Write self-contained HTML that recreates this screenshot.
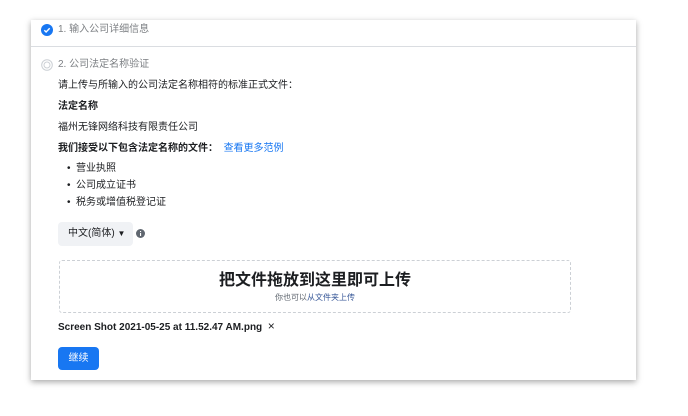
<!DOCTYPE html>
<html><head><meta charset="utf-8"><style>
*{margin:0;padding:0;box-sizing:border-box}
body{width:688px;height:416px;background:#fff;font-family:"Liberation Sans","Noto Sans CJK SC",sans-serif;color:#1c1e21;position:relative;overflow:hidden}
.card{position:absolute;left:31px;top:20px;width:605px;height:360px;background:#fff;box-shadow:0 2px 6px rgba(0,0,0,.35)}
.a{position:absolute;white-space:nowrap;font-size:10px;line-height:12px}
.g{color:#7d8084}
.b{font-weight:bold}
</style></head><body>
<div class="card"></div>
<svg style="position:absolute;left:41px;top:24px" width="12" height="12" viewBox="0 0 12 12"><circle cx="6" cy="6" r="6" fill="#1877f2"/><path d="M3.3 6.2l1.8 1.8 3.6-3.7" stroke="#fff" stroke-width="1.4" fill="none"/></svg>
<div class="a g" style="left:58px;top:24px">1. 输入公司详细信息</div>
<div style="position:absolute;left:31px;top:46px;width:605px;height:1px;background:#dadde1"></div>
<svg style="position:absolute;left:41px;top:59px" width="12" height="12" viewBox="0 0 12 12"><circle cx="6" cy="6" r="5.3" fill="none" stroke="#ccd0d5" stroke-width="1"/><circle cx="6" cy="6" r="3" fill="none" stroke="#ccd0d5" stroke-width="1"/></svg>
<div class="a g" style="left:58px;top:59px">2. 公司法定名称验证</div>
<div class="a" style="left:58px;top:80px">请上传与所输入的公司法定名称相符的标准正式文件：</div>
<div class="a b" style="left:58px;top:101px">法定名称</div>
<div class="a" style="left:58px;top:122px">福州无锋网络科技有限责任公司</div>
<div class="a b" style="left:58px;top:143px">我们接受以下包含法定名称的文件：&nbsp; <span style="color:#1877f2;font-weight:normal">查看更多范例</span></div>
<div class="a" style="left:67px;top:163px">•&nbsp;&nbsp;营业执照</div>
<div class="a" style="left:67px;top:180px">•&nbsp;&nbsp;公司成立证书</div>
<div class="a" style="left:67px;top:197px">•&nbsp;&nbsp;税务或增值税登记证</div>
<div style="position:absolute;left:58px;top:222px;width:75px;height:24px;background:#f0f2f5;border-radius:4px"></div>
<div class="a" style="left:68px;top:228px">中文(简体) <span style="font-size:8px">▼</span></div>
<svg style="position:absolute;left:136px;top:229px" width="9" height="9" viewBox="0 0 9 9"><circle cx="4.5" cy="4.5" r="4.5" fill="#606770"/><rect x="4" y="4" width="1.1" height="3" fill="#fff"/><rect x="4" y="2" width="1.1" height="1.1" fill="#fff"/></svg>
<div style="position:absolute;left:59px;top:260px;width:512px;height:53px;border:1px dashed #ccd0d5;border-radius:3px"></div>
<div class="a b" style="left:59px;width:512px;text-align:center;top:271px;font-size:16px;line-height:20px">把文件拖放到这里即可上传</div>
<div class="a" style="left:59px;width:512px;text-align:center;top:293px;font-size:8px;line-height:10px;color:#606770">你也可以<span style="color:#385898">从文件夹上传</span></div>
<div class="a b" style="left:58px;top:320px">Screen Shot 2021-05-25 at 11.52.47 AM.png&nbsp;&nbsp;<span style="font-weight:normal;font-size:12px">×</span></div>
<div style="position:absolute;left:58px;top:347px;width:41px;height:23px;background:#1877f2;border-radius:4px;color:#fff;font-size:10px;line-height:23px;text-align:center">继续</div>
</body></html>
